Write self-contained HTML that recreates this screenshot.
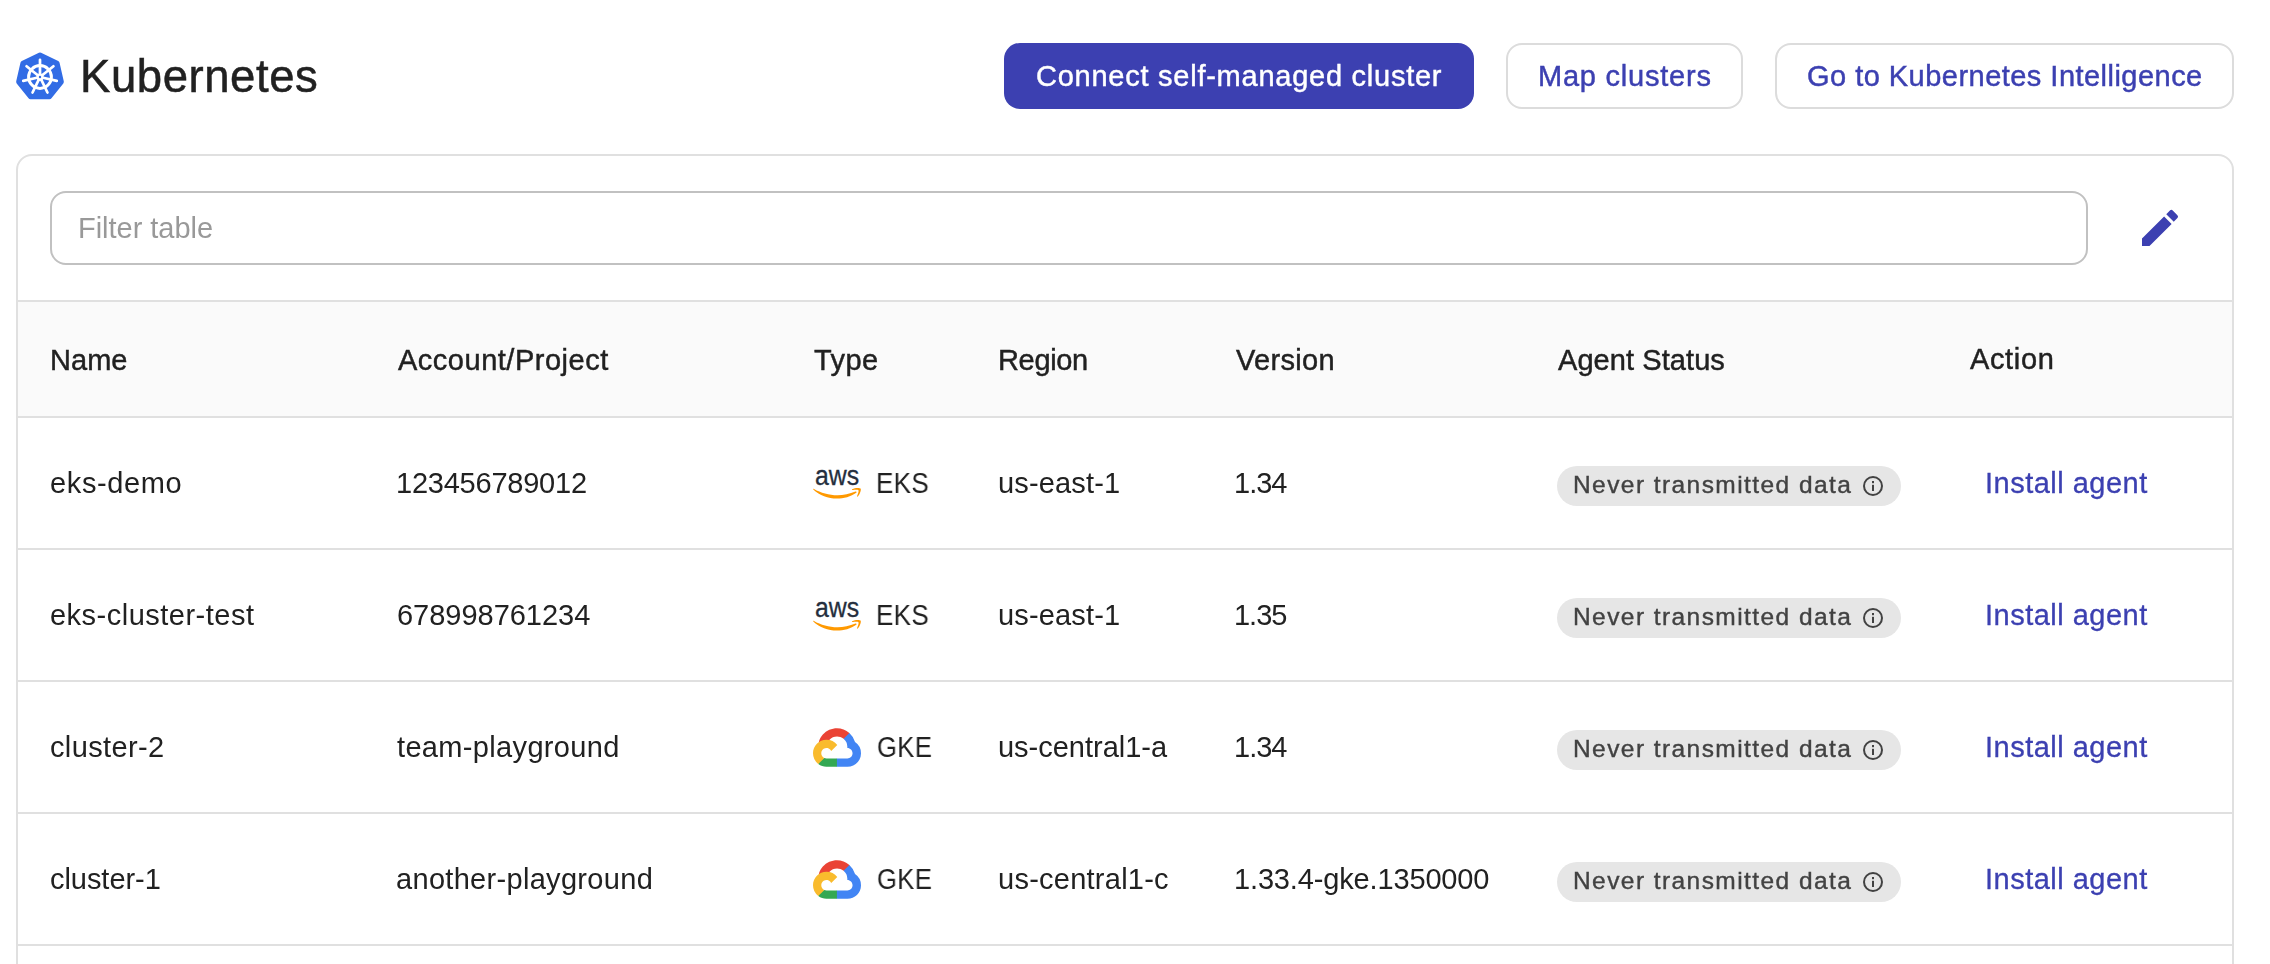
<!DOCTYPE html>
<html lang="en">
<head>
<meta charset="utf-8">
<title>Kubernetes</title>
<style>
  * { box-sizing: border-box; margin: 0; padding: 0; }
  html, body { width: 2270px; height: 964px; overflow: hidden; background: #ffffff; }
  body {
    position: relative;
    font-family: "Liberation Sans", Arial, sans-serif;
    color: #212121;
  }
  .t { position: absolute; display: block; transform-origin: 0 50%; will-change: transform; height: 40px; line-height: 40px; white-space: nowrap; font-weight: 400; }

  /* ---------- page header ---------- */
  .k8s-icon { position: absolute; left: 14px; top: 51.3px; width: 52px; height: 52px; }
  .title { font-size: 45.5px; color: #212121; -webkit-text-stroke: 0.5px currentColor; }
  .btn { position: absolute; top: 43px; height: 66px; border-radius: 16px; }
  .btn.primary { background: #3c40b1; color: #ffffff; }
  .btn.outline { background: #ffffff; color: #3c40b1; border: 2px solid #dcdcdc; }
  .btxt { font-size: 29px; -webkit-text-stroke: 0.45px currentColor; }

  /* ---------- card ---------- */
  .card {
    position: absolute; left: 16px; top: 154px; width: 2218px; height: 900px;
    border: 2px solid #e0e0e0; border-radius: 16px; background: #ffffff; overflow: hidden;
  }
  .filter {
    position: absolute; left: 32px; top: 35px; width: 2038px; height: 74px;
    border: 2px solid #c1c1c1; border-radius: 16px; background: #fff;
  }
  .ph { font-size: 29px; color: #999999; }
  .pencil { position: absolute; left: 2118px; top: 48px; width: 48px; height: 48px; }

  /* ---------- table ---------- */
  .thead {
    position: absolute; left: 0; top: 144px; width: 100%; height: 118px;
    background: #fafafa; border-top: 2px solid #e0e0e0; border-bottom: 2px solid #e0e0e0;
  }
  .th { font-size: 29px; color: #212121; -webkit-text-stroke: 0.45px currentColor; }
  .row {
    position: absolute; left: 0; width: 100%; height: 132px;
    border-bottom: 2px solid #e0e0e0; background: #fff;
  }
  .td { font-size: 29px; color: #212121; }
  .pill {
    position: absolute; left: 1539px; top: 48px; width: 344px; height: 40px;
    border-radius: 20px; background: #e6e6e6; color: #424242;
  }
  .ptxt { font-size: 24.5px; -webkit-text-stroke: 0.4px currentColor; }
  .pill svg { position: absolute; left: 305px; top: 9px; width: 22px; height: 22px; }
  .link { color: #3c40b1; -webkit-text-stroke: 0.3px currentColor; }
  .aws { position: absolute; left: 795px; top: 52px; width: 48.1px; height: 28.8px; overflow: visible; }
  .gcp { position: absolute; left: 795px; top: 45.6px; width: 48px; height: 39px; }
</style>
</head>
<body>

<svg class="k8s-icon" viewBox="0 0 52 52" aria-hidden="true">
  <path d="M26.00 4.10 L43.12 12.35 L47.35 30.87 L35.50 45.73 L16.50 45.73 L4.65 30.87 L8.88 12.35 Z" fill="#326ce5" stroke="#326ce5" stroke-width="5" stroke-linejoin="round"/>
  <path d="M26.00 24.00 L26.00 8.80 M27.56 24.75 L39.45 15.28 M27.95 26.45 L42.77 29.83 M26.87 27.80 L33.46 41.50 M25.13 27.80 L18.54 41.50 M24.05 26.45 L9.23 29.83 M24.44 24.75 L12.55 15.28" stroke="#ffffff" stroke-width="2.7" stroke-linecap="round" fill="none"/>
  <circle cx="26" cy="26" r="11.4" fill="none" stroke="#ffffff" stroke-width="3"/>
  <circle cx="26" cy="26" r="3.6" fill="#ffffff"/>
  <circle cx="26" cy="26" r="1.2" fill="#326ce5"/>
</svg>
<h1 class="t title" id="title" style="left:80px;top:57px;letter-spacing:0.56px">Kubernetes</h1>

<div class="btn primary" style="left:1004px;width:470px;"><span class="t btxt" id="b1" style="left:32px;top:13px;letter-spacing:0.75px">Connect self-managed cluster</span></div>
<div class="btn outline" style="left:1506px;width:237px;"><span class="t btxt" id="b2" style="left:30px;top:11px;letter-spacing:0.78px">Map clusters</span></div>
<div class="btn outline" style="left:1775px;width:459px;"><span class="t btxt" id="b3" style="left:30px;top:11px;letter-spacing:0.47px">Go to Kubernetes Intelligence</span></div>

<section class="card">
  <div class="filter"><span class="t ph" id="filter" style="left:26px;top:15px;letter-spacing:-0.03px">Filter table</span></div>
  <svg class="pencil" viewBox="0 0 24 24" aria-hidden="true">
    <path fill="#3c40b1" d="M3 17.25V21h3.75L17.81 9.94l-3.75-3.75L3 17.25zM20.71 7.04a.996.996 0 0 0 0-1.41l-2.34-2.34a.996.996 0 0 0-1.41 0l-1.83 1.83 3.75 3.75 1.83-1.83z"/>
  </svg>

  <div class="thead">
    <span class="t th" id="h0" style="left:32px;top:38px;letter-spacing:0.04px">Name</span><span class="t th" id="h1" style="left:380px;top:38px;letter-spacing:0.51px">Account/Project</span><span class="t th" id="h2" style="left:796px;top:38px;letter-spacing:0.40px">Type</span><span class="t th" id="h3" style="left:980px;top:38px;letter-spacing:-0.34px">Region</span><span class="t th" id="h4" style="left:1218px;top:38px;letter-spacing:0.33px">Version</span><span class="t th" id="h5" style="left:1540px;top:38px;letter-spacing:0.07px">Agent Status</span><span class="t th" id="h6" style="left:1952px;top:37px;letter-spacing:0.64px">Action</span>
  </div>

  <div class="row" style="top:262px;">
    <span class="t td" id="r0c0" style="left:32px;top:45px;letter-spacing:0.63px">eks-demo</span><span class="t td" id="r0c1" style="left:378px;top:45px;letter-spacing:-0.23px">123456789012</span><svg class="aws" viewBox="0 0 304 182" aria-hidden="true">
      <text x="13" y="93" font-family="Liberation Sans, Arial, sans-serif" font-size="178" font-weight="400" fill="#252f3e" stroke="#252f3e" stroke-width="2" textLength="279" lengthAdjust="spacingAndGlyphs">aws</text>
      <path fill="#ff9900" d="M273.5 143.7c-32.9 24.3-80.7 37.2-121.8 37.2-57.6 0-109.5-21.3-148.7-56.700-3.100-2.800-.300-6.600 3.400-4.400 42.400 24.600 94.700 39.500 148.800 39.500 36.500 0 76.600-7.600 113.500-23.200 5.500-2.500 10.200 3.600 4.800 7.600z"/>
      <path fill="#ff9900" d="M287.200 128.100c-4.200-5.400-27.800-2.600-38.500-1.300-3.200.400-3.700-2.400-.800-4.500 18.800-13.200 49.700-9.400 53.300-5 3.600 4.500-1 35.400-18.600 50.200-2.700 2.300-5.300 1.100-4.100-1.900 4-9.900 12.900-32.200 8.700-37.500z"/>
    </svg><span class="t td" id="r0c2" style="left:858px;top:45px;letter-spacing:0.23px;transform:scaleX(0.900)">EKS</span><span class="t td" id="r0c3" style="left:980px;top:45px;letter-spacing:0.16px">us-east-1</span><span class="t td" id="r0c4" style="left:1216px;top:45px;letter-spacing:-0.99px">1.34</span>
    <div class="pill"><span class="t ptxt" id="r0p" style="left:16px;top:-1px;letter-spacing:1.43px">Never transmitted data</span><svg viewBox="0 0 22 22" aria-hidden="true"><circle cx="11" cy="11" r="9" fill="none" stroke="#424242" stroke-width="2"/><rect x="10" y="9.800" width="2" height="6.200" fill="#424242"/><rect x="10" y="6" width="2" height="2.200" fill="#424242"/></svg></div>
    <span class="t td link" id="r0a" style="left:1967px;top:45px;letter-spacing:0.49px">Install agent</span>
  </div>
  <div class="row" style="top:394px;">
    <span class="t td" id="r1c0" style="left:32px;top:45px;letter-spacing:0.49px">eks-cluster-test</span><span class="t td" id="r1c1" style="left:379px;top:45px;letter-spacing:-0.02px">678998761234</span><svg class="aws" viewBox="0 0 304 182" aria-hidden="true">
      <text x="13" y="93" font-family="Liberation Sans, Arial, sans-serif" font-size="178" font-weight="400" fill="#252f3e" stroke="#252f3e" stroke-width="2" textLength="279" lengthAdjust="spacingAndGlyphs">aws</text>
      <path fill="#ff9900" d="M273.5 143.7c-32.9 24.3-80.7 37.2-121.8 37.2-57.6 0-109.5-21.3-148.7-56.700-3.100-2.800-.300-6.600 3.400-4.400 42.400 24.600 94.700 39.500 148.800 39.500 36.500 0 76.600-7.600 113.500-23.200 5.500-2.500 10.200 3.600 4.800 7.600z"/>
      <path fill="#ff9900" d="M287.200 128.100c-4.200-5.400-27.800-2.600-38.500-1.300-3.200.400-3.700-2.400-.800-4.500 18.800-13.200 49.700-9.400 53.300-5 3.600 4.500-1 35.400-18.600 50.200-2.700 2.300-5.300 1.100-4.100-1.900 4-9.900 12.900-32.200 8.700-37.500z"/>
    </svg><span class="t td" id="r1c2" style="left:858px;top:45px;letter-spacing:0.23px;transform:scaleX(0.900)">EKS</span><span class="t td" id="r1c3" style="left:980px;top:45px;letter-spacing:0.16px">us-east-1</span><span class="t td" id="r1c4" style="left:1216px;top:45px;letter-spacing:-1.01px">1.35</span>
    <div class="pill"><span class="t ptxt" id="r1p" style="left:16px;top:-1px;letter-spacing:1.43px">Never transmitted data</span><svg viewBox="0 0 22 22" aria-hidden="true"><circle cx="11" cy="11" r="9" fill="none" stroke="#424242" stroke-width="2"/><rect x="10" y="9.800" width="2" height="6.200" fill="#424242"/><rect x="10" y="6" width="2" height="2.200" fill="#424242"/></svg></div>
    <span class="t td link" id="r1a" style="left:1967px;top:45px;letter-spacing:0.49px">Install agent</span>
  </div>
  <div class="row" style="top:526px;">
    <span class="t td" id="r2c0" style="left:32px;top:45px;letter-spacing:0.37px">cluster-2</span><span class="t td" id="r2c1" style="left:379px;top:45px;letter-spacing:0.34px">team-playground</span><svg class="gcp" viewBox="0 0 256 206" aria-hidden="true">
      <path fill="#ea4335" d="M170.252 56.819l22.253-22.253 1.483-9.370C153.437-11.677 88.976-7.496 52.420 33.920 42.267 45.423 34.734 59.764 30.717 74.573l7.970-1.123 44.505-7.340 3.436-3.513c19.797-21.742 53.270-24.667 76.128-6.168l7.496.390z"/>
      <path fill="#4285f4" d="M224.205 73.918a100.249 100.249 0 0 0-30.217-48.722l-31.232 31.232a55.515 55.515 0 0 1 20.379 44.037v5.544c15.350 0 27.797 12.445 27.797 27.796 0 15.352-12.446 27.485-27.797 27.485h-55.671l-5.466 5.934v33.340l5.466 5.231h55.670c39.930.311 72.553-31.494 72.864-71.424a72.303 72.303 0 0 0-31.793-60.453"/>
      <path fill="#34a853" d="M71.870 205.796h55.593V161.290H71.870a27.275 27.275 0 0 1-11.399-2.498l-7.887 2.420-22.409 22.253-1.952 7.574c12.567 9.489 27.900 14.825 43.647 14.757"/>
      <path fill="#f9bb2d" d="M71.870 61.425C31.940 61.663-.237 94.228.001 134.159a72.301 72.301 0 0 0 28.222 56.880l32.248-32.246c-13.990-6.322-20.208-22.786-13.887-36.776 6.320-13.990 22.786-20.208 36.775-13.888a27.796 27.796 0 0 1 13.887 13.888l32.248-32.248A72.224 72.224 0 0 0 71.870 61.425"/>
    </svg><span class="t td" id="r2c2" style="left:859px;top:45px;letter-spacing:0.56px;transform:scaleX(0.880)">GKE</span><span class="t td" id="r2c3" style="left:980px;top:45px;letter-spacing:-0.01px">us-central1-a</span><span class="t td" id="r2c4" style="left:1216px;top:45px;letter-spacing:-0.99px">1.34</span>
    <div class="pill"><span class="t ptxt" id="r2p" style="left:16px;top:-1px;letter-spacing:1.43px">Never transmitted data</span><svg viewBox="0 0 22 22" aria-hidden="true"><circle cx="11" cy="11" r="9" fill="none" stroke="#424242" stroke-width="2"/><rect x="10" y="9.800" width="2" height="6.200" fill="#424242"/><rect x="10" y="6" width="2" height="2.200" fill="#424242"/></svg></div>
    <span class="t td link" id="r2a" style="left:1967px;top:45px;letter-spacing:0.49px">Install agent</span>
  </div>
  <div class="row" style="top:658px;">
    <span class="t td" id="r3c0" style="left:32px;top:45px;letter-spacing:-0.05px">cluster-1</span><span class="t td" id="r3c1" style="left:378px;top:45px;letter-spacing:0.31px">another-playground</span><svg class="gcp" viewBox="0 0 256 206" aria-hidden="true">
      <path fill="#ea4335" d="M170.252 56.819l22.253-22.253 1.483-9.370C153.437-11.677 88.976-7.496 52.420 33.920 42.267 45.423 34.734 59.764 30.717 74.573l7.970-1.123 44.505-7.340 3.436-3.513c19.797-21.742 53.270-24.667 76.128-6.168l7.496.390z"/>
      <path fill="#4285f4" d="M224.205 73.918a100.249 100.249 0 0 0-30.217-48.722l-31.232 31.232a55.515 55.515 0 0 1 20.379 44.037v5.544c15.350 0 27.797 12.445 27.797 27.796 0 15.352-12.446 27.485-27.797 27.485h-55.671l-5.466 5.934v33.340l5.466 5.231h55.670c39.930.311 72.553-31.494 72.864-71.424a72.303 72.303 0 0 0-31.793-60.453"/>
      <path fill="#34a853" d="M71.870 205.796h55.593V161.290H71.870a27.275 27.275 0 0 1-11.399-2.498l-7.887 2.420-22.409 22.253-1.952 7.574c12.567 9.489 27.900 14.825 43.647 14.757"/>
      <path fill="#f9bb2d" d="M71.870 61.425C31.940 61.663-.237 94.228.001 134.159a72.301 72.301 0 0 0 28.222 56.880l32.248-32.246c-13.990-6.322-20.208-22.786-13.887-36.776 6.320-13.990 22.786-20.208 36.775-13.888a27.796 27.796 0 0 1 13.887 13.888l32.248-32.248A72.224 72.224 0 0 0 71.870 61.425"/>
    </svg><span class="t td" id="r3c2" style="left:859px;top:45px;letter-spacing:0.56px;transform:scaleX(0.880)">GKE</span><span class="t td" id="r3c3" style="left:980px;top:45px;letter-spacing:0.25px">us-central1-c</span><span class="t td" id="r3c4" style="left:1216px;top:45px;letter-spacing:-0.15px">1.33.4-gke.1350000</span>
    <div class="pill"><span class="t ptxt" id="r3p" style="left:16px;top:-1px;letter-spacing:1.43px">Never transmitted data</span><svg viewBox="0 0 22 22" aria-hidden="true"><circle cx="11" cy="11" r="9" fill="none" stroke="#424242" stroke-width="2"/><rect x="10" y="9.800" width="2" height="6.200" fill="#424242"/><rect x="10" y="6" width="2" height="2.200" fill="#424242"/></svg></div>
    <span class="t td link" id="r3a" style="left:1967px;top:45px;letter-spacing:0.49px">Install agent</span>
  </div>
</section>

</body>
</html>
